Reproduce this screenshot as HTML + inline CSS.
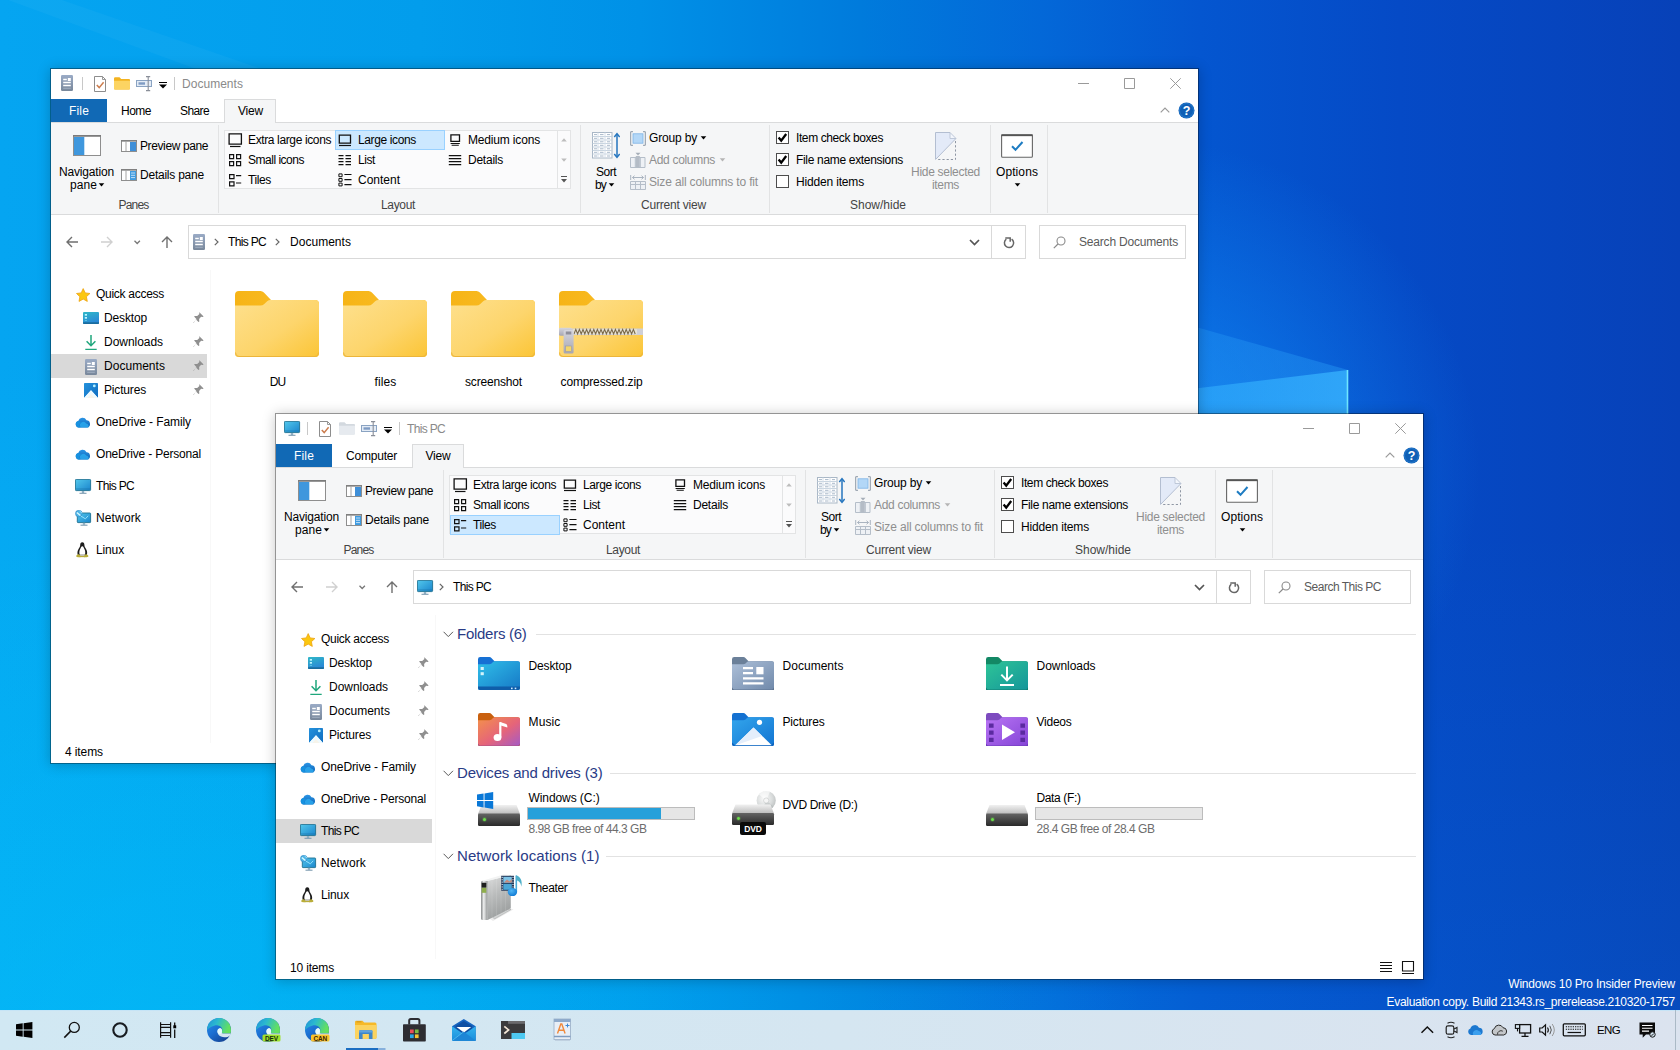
<!DOCTYPE html>
<html><head><meta charset="utf-8">
<style>
*{box-sizing:border-box;margin:0;padding:0}
html,body{width:1680px;height:1050px;overflow:hidden}
body{font-family:"Liberation Sans",sans-serif;font-size:12px;letter-spacing:-0.3px;color:#000;position:relative;
background:
 radial-gradient(ellipse 1000px 700px at 150px 1050px,rgba(0,215,255,.32),rgba(0,215,255,0) 100%),
 linear-gradient(180deg,rgba(0,200,255,0) 50%,rgba(0,200,255,.08) 100%),
 radial-gradient(ellipse 330px 330px at 1150px 470px,rgba(20,150,255,.7),rgba(20,150,255,0) 100%),
 linear-gradient(90deg,#05a5f1 0px,#029dec 420px,#0091e7 640px,#007bdc 860px,#0368d8 1040px,#0456d0 1200px,#054ac6 1400px,#0741b8 1680px);}
.a{position:absolute}
svg{position:absolute;overflow:visible}
.t{position:absolute;white-space:nowrap;line-height:14px}
.c{transform:translateX(-50%)}
.win{position:absolute;width:1149px;border:1px solid rgba(0,0,0,.42);box-shadow:0 1px 12px rgba(0,0,0,.22);}
.wi{position:absolute;left:0;top:0;width:1147px;height:100%;background:#fff;overflow:hidden}
.ttl{color:#8a8a8a}
.file{left:0;top:30px;width:56px;height:23px;background:#1169b5;color:#fff;text-align:center;line-height:24px}
.rib{left:0;top:53px;width:1147px;height:93px;background:#f5f6f7;border-top:1px solid #dadbdc;border-bottom:1px solid #dadbdc}
.vtab{top:30px;width:52px;height:24px;background:#f5f6f7;border:1px solid #dadbdc;border-bottom:none}
.sep{position:absolute;top:56px;width:1px;height:88px;background:#e2e3e4}
.gl{color:#444}
.dis{color:#8f8f8f}
.cb{position:absolute;width:13px;height:13px;border:1px solid #4d4d4d;background:#fff}
.box{position:absolute;border:1px solid #d9d9d9;background:#fff}
.sel{position:absolute;background:#cce8ff;border:1px solid #99d1ff}
.gsel{position:absolute;background:#d9d9d9}
.hdr{position:absolute;font-size:15px;letter-spacing:-0.3px;color:#293b86;white-space:nowrap;line-height:18px}
.hl{position:absolute;height:1px;background:#e2e2e2}
.sub{color:#6d6d6d}
.g5{color:#5a5a5a}
#tb{left:0;top:1010px;width:1680px;height:40px;background:linear-gradient(90deg,#d1e8f3 0,#d5e6f1 50%,#dbe3ef 100%);box-shadow:inset 0 1px 0 #c6e4f6}
.wm{color:#fff;right:5px;text-align:right;letter-spacing:-0.2px}
</style></head><body>
<svg width="0" height="0" style="position:absolute;left:0;top:0">
<defs>
<linearGradient id="g-doc" x1="0" y1="0" x2="0" y2="1"><stop offset="0" stop-color="#9aabc6"/><stop offset="1" stop-color="#78879a"/></linearGradient><linearGradient id="g-desk16" x1="0" y1="0" x2=".4" y2="1"><stop offset="0" stop-color="#30b8c8"/><stop offset="1" stop-color="#2a88d6"/></linearGradient><linearGradient id="g-pic16" x1="0" y1="0" x2="1" y2="1"><stop offset="0" stop-color="#2492dc"/><stop offset="1" stop-color="#0f6cc0"/></linearGradient>
<linearGradient id="g-desk" x1="0" y1="0" x2="1" y2="1"><stop offset="0" stop-color="#3fc0ea"/><stop offset="1" stop-color="#1372bf"/></linearGradient>
<linearGradient id="g-pc" x1="0" y1="0" x2="1" y2="1"><stop offset="0" stop-color="#52c8ec"/><stop offset="1" stop-color="#1a84cc"/></linearGradient>
<linearGradient id="g-cloud" x1="0" y1="0" x2="0" y2="1"><stop offset="0" stop-color="#2a95e6"/><stop offset="1" stop-color="#0f62b4"/></linearGradient>
<linearGradient id="g-fold" x1="0" y1="0" x2="1" y2="1"><stop offset="0" stop-color="#fee08d"/><stop offset=".55" stop-color="#fdd56c"/><stop offset="1" stop-color="#fbc536"/></linearGradient>
<linearGradient id="g-foldtab" x1="0" y1="0" x2="1" y2="0"><stop offset="0" stop-color="#f6b417"/><stop offset="1" stop-color="#fbc02a"/></linearGradient>
</defs>

<!-- ===== title bar ===== -->
<symbol id="i-doc16"><rect x="0" y="0" width="12" height="16" rx="1.2" fill="url(#g-doc)"/><path d="M2.2 4.5h3.6M2.2 7.5h7.6M2.2 10.5h7.6" stroke="#fff" stroke-width="1.3"/><rect x="6.8" y="3" width="3" height="3" fill="#fff"/><path d="M2.2 13.3h7.6" stroke="#a9b6c8" stroke-width=".8"/></symbol>
<symbol id="i-doc16s"><rect x="0" y="0" width="11" height="14" rx="1" fill="url(#g-doc)"/><path d="M2 4h3.2M2 6.6h7M2 9.2h7" stroke="#fff" stroke-width="1.1"/><rect x="6.2" y="2.6" width="2.8" height="2.6" fill="#fff"/></symbol>
<symbol id="i-prop"><path d="M.5 .5h8l3 3v12H.5z" fill="#fff" stroke="#8d8d8d"/><path d="M8.5 .5v3h3" fill="none" stroke="#8d8d8d" stroke-width=".9"/><path d="M2.8 9l2.4 2.6 4.4-5.4" fill="none" stroke="#cc7d4e" stroke-width="1.500"/></symbol>
<symbol id="i-fold16"><path d="M0 1.500Q0 .3 1.200 .3h4.300l1.700 1.600H15q1 0 1 1V11.500q0 1-1 1H1q-1 0-1-1z" fill="#f3b320"/><path d="M0 3.800h16V11.500q0 1-1 1H1q-1 0-1-1z" fill="#fcd462"/></symbol>
<symbol id="i-fold16g"><path d="M0 1.500Q0 .3 1.200 .3h4.300l1.700 1.600H15q1 0 1 1V11.500q0 1-1 1H1q-1 0-1-1z" fill="#d3d9df"/><path d="M0 3.800h16V11.500q0 1-1 1H1q-1 0-1-1z" fill="#e6eaef"/></symbol>
<symbol id="i-ren"><rect x=".5" y="4.5" width="15" height="6" fill="#e4ecf6" stroke="#8aa3c2"/><rect x="2.5" y="6.3" width="6.5" height="2.4" fill="#7f9cc4"/><path d="M10 .6h2.2M14.2 .6h-2M10 14.6h2.2M14.2 14.6h-2M12.2 .6v14" stroke="#8a8f99" stroke-width="1.1" fill="none"/></symbol>

<!-- ===== ribbon ===== -->
<symbol id="i-navpane"><rect x=".5" y="1" width="27" height="19.500" fill="#fff" stroke="#8e8e8e"/><path d="M0 .8h28" stroke="#7b7b7b" stroke-width="1.600"/><rect x="1" y="2" width="10.300" height="18" fill="#3f97dd"/></symbol>
<symbol id="i-prevpane"><rect x=".5" y=".8" width="15" height="10.7" fill="#fff" stroke="#8e8e8e"/><path d="M0 .8h16" stroke="#7b7b7b" stroke-width="1.4"/><path d="M5 1.5v9.5" stroke="#9a9a9a" stroke-width=".9"/><rect x="9" y="2" width="6" height="9" fill="#3f8fd8"/></symbol>
<symbol id="i-detpane"><rect x=".5" y=".8" width="15" height="10.7" fill="#fff" stroke="#8e8e8e"/><path d="M0 .8h16" stroke="#7b7b7b" stroke-width="1.4"/><path d="M5 1.5v9.5" stroke="#9a9a9a" stroke-width=".9"/><rect x="9" y="2" width="6" height="9" fill="#3f9be0"/><path d="M10 4h4M10 6.3h4M10 8.6h4" stroke="#cfe6fa" stroke-width=".9"/></symbol>
<symbol id="i-xl"><path d="M1.1 1.9h12.3v10.2H1.1z" fill="none" stroke="#111" stroke-width="1.3"/><path d="M2 14.5h10.5" stroke="#111" stroke-width="1.2"/></symbol>
<symbol id="i-lg"><path d="M1.3 3.2h11.2v8H1.3z" fill="none" stroke="#111" stroke-width="1.3"/><path d="M1 13.5h12" stroke="#111" stroke-width="1.2"/></symbol>
<symbol id="i-med"><path d="M2.900 2.900h8.600v6.400H2.900z" fill="none" stroke="#111" stroke-width="1.300"/><path d="M2.600 11.500h9.200M3.600 13.300h7.200" stroke="#111" stroke-width="1.100"/></symbol>
<symbol id="i-sm"><path d="M1.6 2.6h4v4h-4zM8.6 2.6h4v4h-4zM1.6 9.6h4v4h-4zM8.6 9.6h4v4h-4z" fill="none" stroke="#111" stroke-width="1.2"/></symbol>
<symbol id="i-tiles"><path d="M1.6 2.6h4.4v4H1.6zM1.6 9.9h4.4v4H1.6z" fill="none" stroke="#111" stroke-width="1.2"/><path d="M8 3.6h5.2M8 11h5.2" stroke="#111" stroke-width="1.2"/></symbol>
<symbol id="i-list"><path d="M.5 3.6h5M7.5 3.6h5.5M.5 6.6h5M7.5 6.6h5.5M.5 9.6h5M7.5 9.6h5.5M.5 12.6h5M7.5 12.6h5.5" stroke="#111" stroke-width="1.2"/></symbol>
<symbol id="i-details"><path d="M.8 3.6h12.4M.8 6.6h12.4M.8 9.6h12.4M.8 12.6h12.4" stroke="#111" stroke-width="1.2"/></symbol>
<symbol id="i-content"><path d="M.9 1.900h3.200v2.800H.9zM.9 6.500h3.200v2.800H.9zM.9 11.100h3.200v2.800H.9z" fill="none" stroke="#111" stroke-width="1"/><path d="M6.400 2.500H13.500M6.400 7.700H13.500M6.400 12.700H13.500" stroke="#111" stroke-width="1.200"/></symbol>
<symbol id="i-sort"><rect x=".5" y=".5" width="19.5" height="25.5" fill="#fff" stroke="#a9b7c6"/><path d="M.5 4.5h19.5M.5 8h19.5M.5 11.5h19.5M.5 15h19.5M.5 18.5h19.5M.5 22h19.5" stroke="#c3d0dd" stroke-width=".9"/><path d="M6 .5v25.5M13 .5v25.5" stroke="#d3dde8" stroke-width=".9"/><path d="M2 2.6h3M8 2.6h3.5M15 2.6h3M2 6.3h3M8 6.3h3.5M15 6.3h3M2 9.8h3M8 9.8h3.5M15 9.8h3M2 13.3h3M8 13.3h3.5M15 13.3h3M2 16.8h3M8 16.8h3.5M15 16.8h3M2 20.3h3M8 20.3h3.5M15 20.3h3M2 24h3M8 24h3.5M15 24h3" stroke="#9fb0c3" stroke-width=".9"/><path d="M25 2.5v22" stroke="#2475be" stroke-width="1.5"/><path d="M22.3 5L25 1.6 27.7 5M22.3 22L25 25.4 27.7 22" fill="none" stroke="#2475be" stroke-width="1.5"/></symbol>
<symbol id="i-group"><rect x="3" y="2.800" width="10" height="9.400" fill="#b3d7f7" stroke="#7db3e6" stroke-width=".8"/><path d="M3 .7H.7v13.600H3M13 .7h2.300v13.600H13" fill="none" stroke="#8e99a6" stroke-width="1"/></symbol>
<symbol id="i-addcol"><path d="M.5 5.5h14.5v10H.5z" fill="#eef1f5" stroke="#b5bec9"/><path d="M5.3 5.5v10M10.3 5.5v10" stroke="#b5bec9"/><rect x="5.8" y="4" width="4" height="11.5" fill="#b4bcc6"/><path d="M5.5 .8h5L8 3.6z" fill="#a6aeb8"/></symbol>
<symbol id="i-sizecol"><path d="M.5 7.5h15v8H.5z" fill="#eef1f5" stroke="#b5bec9"/><path d="M.5 10.5h15M5.5 7.5v8M10.5 7.5v8" stroke="#b5bec9"/><path d="M.7 1v5M15.3 1v5M2.5 3.5h11M4.5 1.7L2.5 3.5l2 1.8M11.5 1.7l2 1.8-2 1.8" fill="none" stroke="#aab4c0" stroke-width="1"/></symbol>
<symbol id="i-hide"><path d="M.5 .5h14.500L21 6.500 .5 27.500z" fill="#e3eaf8"/><path d="M.5 27.500V.5h14.500M20.800 6.700L.7 27.300" fill="none" stroke="#b3bed1" stroke-width="1"/><path d="M15 .5v6h6z" fill="#f3f6fc" stroke="#b9c3d4" stroke-width=".9" stroke-linejoin="round"/><path d="M20.500 9v18.500H2.500" fill="none" stroke="#8f97a4" stroke-width="1" stroke-dasharray="2.200 2"/></symbol>
<symbol id="i-options"><rect x=".6" y="1" width="30.800" height="22.300" rx="1" fill="#fff" stroke="#666" stroke-width="1.100"/><path d="M.3 1.200h31.400" stroke="#555" stroke-width="1.900"/><path d="M11 12.300l3.500 3.500 7-7.800" fill="none" stroke="#1e7cc2" stroke-width="2"/></symbol>

<!-- ===== nav pane ===== -->
<symbol id="i-star"><path d="M7.200 .6l2 4.300 4.700.6-3.500 3.200.9 4.700L7.200 11.100 3 13.400l.9-4.700L.5 5.500l4.700-.6z" fill="#fbc70f" stroke="#eda20f" stroke-width=".8" stroke-linejoin="round"/></symbol>
<symbol id="i-desk16"><rect x="0" y="0" width="16" height="12" rx="1" fill="url(#g-desk16)"/><path d="M0 10.300h16V11q0 1-1 1H1q-1 0-1-1z" fill="#1a6c9e"/><rect x="1.800" y="2" width="2.200" height="1.700" fill="#bdf6ff"/><rect x="1.800" y="5" width="2.200" height="1.700" fill="#bdf6ff"/><rect x="1.800" y="8" width="2.200" height="1" fill="#6fd3ec" opacity=".7"/></symbol>
<symbol id="i-down16"><path d="M7 1v10.500M2.600 7.300L7 11.700l4.400-4.400" fill="none" stroke="#1fa67c" stroke-width="1.500"/><path d="M1.300 15.500h11.400" stroke="#1fa67c" stroke-width="1.500"/></symbol>
<symbol id="i-pic16"><path d="M0 .8Q0 0 .8 0H13.200Q14 0 14 .8V15L7 7.300 0 15z" fill="url(#g-pic16)"/><path d="M0 15L7 7.300 14 15z" fill="#eefaff"/><path d="M3.500 15L7 11l3.500 4z" fill="#f7f4ea"/><circle cx="10.300" cy="2.900" r="1.400" fill="#b5f0ff"/></symbol>
<symbol id="i-cloud"><path d="M3.700 10.400A3.200 3.200 0 0 1 3.200 4.100 4.500 4.500 0 0 1 11.500 3.200 3.700 3.700 0 0 1 12.500 10.400z" fill="url(#g-cloud)"/><path d="M5.600 10.400A3.400 3.400 0 0 1 11.200 6.400 2.800 2.800 0 0 1 13.400 10.400z" fill="#2aa6ec" opacity=".9"/><path d="M3.700 10.400A3.200 3.200 0 0 1 3.200 4.100c.6 0 2 .5 2.800 1.500A3.400 3.400 0 0 0 5.600 10.400z" fill="#1791e0"/></symbol>
<symbol id="i-pc16"><rect x=".4" y=".4" width="15.200" height="11.200" rx=".8" fill="url(#g-pc)" stroke="#1c6f90" stroke-width=".9"/><path d="M1 10h14" stroke="#166a9c" stroke-width="1" opacity=".5"/><path d="M6.800 12h2.400v2H6.800z" fill="#8fb0c4"/><path d="M4.500 14.300h7" stroke="#7d9bb0" stroke-width="1.100"/></symbol>
<symbol id="i-net16"><rect x="2.300" y="3" width="13.300" height="9.600" rx=".7" fill="url(#g-pc)" stroke="#1c6f90" stroke-width=".9"/><path d="M7.800 12.800h2.400v2H7.800z" fill="#8fb0c4"/><path d="M5.500 15.200h7" stroke="#7d9bb0" stroke-width="1.100"/><circle cx="3.800" cy="3.600" r="3.300" fill="#4fb4e6" stroke="#2d86c4" stroke-width=".6"/><path d="M1.800 2.400l3.600 3.200" stroke="#d9fbff" stroke-width="1.300"/><path d="M4.500 .9l2.700 2.300M5.800 6l4.600 2.800 2.800-3" stroke="#9fe6ff" stroke-width=".9" fill="none"/></symbol>
<symbol id="i-linux"><path d="M6.300 .3c1.500 0 2.100 1.200 2.100 2.800 0 1.600 1 2.800 1.900 4.400.9 1.600 1.200 3.800.4 5.700H1.900c-.8-1.900-.5-4.100.4-5.700.9-1.600 1.900-2.800 1.900-4.400C4.200 1.500 4.800.3 6.300.3z" fill="#1c1c1c"/><path d="M6.300 4.200c1.100 0 1.500 1.500 2.200 3 .8 1.500 1.100 3.900.3 5.600H3.800c-.8-1.700-.5-4.100.3-5.600.7-1.500 1.100-3 2.200-3z" fill="#fff"/><path d="M.2 14.300c0-1.100 1.500-2.400 2.700-2 1.100.4 2 1.800 1.700 2.600-.4.700-4.400.5-4.400-.6zM12.400 14.300c0-1.100-1.500-2.400-2.700-2-1.100.4-2 1.800-1.700 2.600.4.700 4.400.5 4.400-.6z" fill="#b9ad3a"/><path d="M3.500 14.500h5.600" stroke="#b9ad3a" stroke-width="1.300"/></symbol>
<symbol id="i-pin"><path d="M6.600 .6l4 4-.9.500-1.600-.3-2 2.300.2 2.300-.8.700-2.500-2.600L.6 10.900l-.2-.3L3.600 7.200 1.100 4.600l.7-.7 2.400.2 2.200-2-.3-1.500z" fill="#8f8f8f"/></symbol>

<!-- ===== big folder (84x66) ===== -->
<defs>
<path id="p-bigback" d="M0 4Q0 0 4 0H25.500Q27.500 0 28.900 1.500L36 9H80Q84 9 84 13V62Q84 66 80 66H4Q0 66 0 62Z"/>
<path id="p-bigfront" d="M0 14.500H25.500Q27.600 14.500 29 13.200L32.200 10.300Q33.600 9 35.600 9H80Q84 9 84 13V62Q84 66 80 66H4Q0 66 0 62Z"/>
<path id="p-fback" d="M0 2.200Q0 0 2.200 0H11.400Q12.600 0 13.400 .9L16.500 4.300H39.800Q42 4.300 42 6.500V30.800Q42 33 39.800 33H2.200Q0 33 0 30.800Z"/>
<path id="p-ffront" d="M0 7.300H11.400Q12.600 7.300 13.500 6.500L15 5.100Q15.900 4.300 17.100 4.300H39.800Q42 4.300 42 6.500V30.800Q42 33 39.800 33H2.200Q0 33 0 30.800Z"/>
<linearGradient id="g-tdesk" x1="0" y1="0" x2="1" y2="1"><stop offset="0" stop-color="#30bfe9"/><stop offset="1" stop-color="#1678c6"/></linearGradient>
<linearGradient id="g-tdocs" x1="0" y1="0" x2="1" y2="1"><stop offset="0" stop-color="#adc0d9"/><stop offset="1" stop-color="#7089aa"/></linearGradient>
<linearGradient id="g-tdown" x1="0" y1="0" x2="1" y2="1"><stop offset="0" stop-color="#2ec597"/><stop offset="1" stop-color="#15959a"/></linearGradient>
<linearGradient id="g-tmus" x1="0" y1="0" x2="1" y2="1"><stop offset="0" stop-color="#f4914a"/><stop offset=".55" stop-color="#e5647a"/><stop offset="1" stop-color="#a45ac6"/></linearGradient>
<linearGradient id="g-tpic" x1="0" y1="0" x2="1" y2="1"><stop offset="0" stop-color="#33a6ec"/><stop offset="1" stop-color="#1274d2"/></linearGradient>
<linearGradient id="g-tvid" x1="0" y1="0" x2="1" y2="1"><stop offset="0" stop-color="#b874f4"/><stop offset="1" stop-color="#8444d6"/></linearGradient>
<linearGradient id="g-drvtop" x1="0" y1="0" x2="0" y2="1"><stop offset="0" stop-color="#f1f1f1"/><stop offset="1" stop-color="#bcbcbc"/></linearGradient>
<linearGradient id="g-drvfront" x1="0" y1="0" x2="0" y2="1"><stop offset="0" stop-color="#646464"/><stop offset="1" stop-color="#2a2a2a"/></linearGradient>
<linearGradient id="g-tside" x1="0" y1="0" x2=".3" y2="1"><stop offset="0" stop-color="#dcdddd"/><stop offset=".5" stop-color="#b9bbbb"/><stop offset="1" stop-color="#9c9f9f"/></linearGradient><linearGradient id="g-tfront" x1="0" y1="0" x2="1" y2="0"><stop offset="0" stop-color="#7d8081"/><stop offset=".4" stop-color="#f0f1f1"/><stop offset=".75" stop-color="#b7b9b9"/><stop offset="1" stop-color="#8f9293"/></linearGradient><radialGradient id="g-note" cx=".4" cy=".35" r=".7"><stop offset="0" stop-color="#4fb6f6"/><stop offset="1" stop-color="#0f78d2"/></radialGradient><linearGradient id="g-tower" x1="0" y1="0" x2="1" y2="0"><stop offset="0" stop-color="#8f9394"/><stop offset=".25" stop-color="#d9dcdc"/><stop offset=".6" stop-color="#c1c4c5"/><stop offset="1" stop-color="#8e9293"/></linearGradient>
<linearGradient id="g-zip" x1="0" y1="0" x2="0" y2="1"><stop offset="0" stop-color="#d6d6de"/><stop offset="1" stop-color="#a6a6b2"/></linearGradient>
</defs>
<symbol id="i-folder"><use href="#p-bigback" fill="url(#g-foldtab)"/><use href="#p-bigfront" fill="url(#g-fold)"/><path d="M.5 61.500Q.5 65.500 4 65.500H80Q83.500 65.500 83.500 61.500" fill="none" stroke="#ecb53a" stroke-width="1"/></symbol>
<symbol id="i-zip"><use href="#p-bigback" fill="url(#g-foldtab)"/><use href="#p-bigfront" fill="url(#g-fold)"/><path d="M.5 61.500Q.5 65.500 4 65.500H80Q83.500 65.500 83.500 61.500" fill="none" stroke="#ecb53a" stroke-width="1"/>
<rect x="0" y="37.500" width="84" height="6.500" fill="#cfcfd6"/><path d="M14 38.200H78V43.300H14z" fill="#e9e4d4"/><path d="M15 43l1.800-4.600 1.800 4.600 1.800-4.600 1.800 4.600 1.800-4.600 1.800 4.600 1.800-4.600 1.800 4.600 1.800-4.600 1.800 4.600 1.800-4.600 1.800 4.600 1.800-4.600 1.800 4.600 1.800-4.600 1.800 4.600 1.800-4.600 1.800 4.600 1.800-4.600 1.800 4.600 1.800-4.600 1.800 4.600 1.800-4.600 1.800 4.600 1.800-4.600 1.800 4.600 1.800-4.600 1.800 4.600 1.800-4.600 1.800 4.600 1.800-4.600 1.800 4.600 1.800-4.600 1.800 4.600" fill="none" stroke="#7b6a4b" stroke-width="1.100"/>
<rect x="0" y="36.800" width="13" height="8" rx="1.500" fill="url(#g-zip)"/><rect x="4.600" y="39" width="10" height="23.500" rx="1.500" fill="url(#g-zip)"/><rect x="6.600" y="55" width="6" height="5.500" fill="#f3d56b" stroke="#9a9aa6" stroke-width=".6"/><rect x="6.800" y="40.500" width="5.500" height="3" fill="#8f8f9b"/></symbol>

<!-- ===== This PC tiles (42x33) ===== -->
<symbol id="t-desk"><use href="#p-fback" fill="#1670d4"/><use href="#p-ffront" fill="url(#g-tdesk)"/><path d="M0 29.600H42V30.800Q42 33 39.800 33H2.200Q0 33 0 30.800Z" fill="#0f5da9"/><rect x="2.600" y="10" width="3.200" height="3" fill="#d4f3fb"/><rect x="2.600" y="15.200" width="3.200" height="3" fill="#d4f3fb"/><rect x="33" y="30.600" width="1.600" height="1.600" fill="#cfeaff"/><rect x="36.700" y="30.600" width="1.600" height="1.600" fill="#cfeaff"/></symbol>
<symbol id="t-docs"><use href="#p-fback" fill="#6b8099"/><use href="#p-ffront" fill="url(#g-tdocs)"/><path d="M0 30.800Q0 33 2.200 33H39.800Q42 33 42 30.800" fill="none" stroke="#5f7591" stroke-width="1.200"/><path d="M11 11.200h10M11 16.200h10M11 21.300h20.500M11 26.400h20.500" stroke="#fff" stroke-width="2.200"/><rect x="24.300" y="10" width="7.200" height="7.300" fill="#fff"/></symbol>
<symbol id="t-down"><use href="#p-fback" fill="#138865"/><use href="#p-ffront" fill="url(#g-tdown)"/><path d="M0 30.800Q0 33 2.200 33H39.800Q42 33 42 30.800" fill="none" stroke="#117f73" stroke-width="1.200"/><path d="M21 9.500V23M15.300 17.600L21 23.400l5.700-5.800" fill="none" stroke="#fff" stroke-width="2"/><path d="M14 28h14" stroke="#fff" stroke-width="2"/></symbol>
<symbol id="t-music"><use href="#p-fback" fill="#c9600e"/><use href="#p-ffront" fill="url(#g-tmus)"/><path d="M0 30.800Q0 33 2.200 33H39.800Q42 33 42 30.800" fill="none" stroke="#a9517e" stroke-width="1"/><ellipse cx="19.500" cy="24.500" rx="3.900" ry="3.500" fill="#fff"/><path d="M22.300 24.500V9.200" stroke="#fff" stroke-width="2.200"/><path d="M22 9l5.500 1.800q1.800.6 1.800 2.200v1.600l-7.300-2.400z" fill="#fff"/></symbol>
<symbol id="t-pics"><use href="#p-fback" fill="#1471d1"/><use href="#p-ffront" fill="url(#g-tpic)"/><path d="M3 32.600L21.500 14.500 40 32.600z" fill="#fff"/><path d="M3 32.600L21.500 14.500 30 23z" fill="#e4eefb"/><path d="M0 29.500L3.300 32.600H2.200Q0 33 0 30.800zM42 29.500L38.700 32.600H39.800Q42 33 42 30.800z" fill="#0f62bb"/><circle cx="27.500" cy="9.300" r="2.600" fill="#fff"/><path d="M1.500 32.700h39" stroke="#0f62bb" stroke-width=".8"/></symbol>
<symbol id="t-vids"><use href="#p-fback" fill="#7d4bbf"/><use href="#p-ffront" fill="url(#g-tvid)"/><path d="M0 30.800Q0 33 2.200 33H39.800Q42 33 42 30.800" fill="none" stroke="#6e3bb8" stroke-width="1.200"/><path d="M3 10.500h4.600v4.200H3zM3 17.600h4.600v4.200H3zM3 24.700h4.600v4.200H3zM34.400 10.500H39v4.200h-4.600zM34.400 17.600H39v4.200h-4.600zM34.400 24.700H39v4.200h-4.600z" fill="#5b2aa0"/><path d="M16 11.500L29 19.200 16 27z" fill="#fff"/></symbol>
<symbol id="t-drive"><path d="M3.500 0H38.500L42 9H0z" fill="url(#g-drvtop)"/><rect x="0" y="8.500" width="42" height="12.500" rx="1.200" fill="url(#g-drvfront)"/><circle cx="6.500" cy="14.500" r="1.500" fill="#6be04a"/><circle cx="6.500" cy="14.500" r="2.400" fill="#6be04a" opacity=".25"/></symbol>
<symbol id="t-winlogo"><path d="M0 2.600L6.600 1.500V8H0zM7.500 1.400L16.200 0V8H7.500zM0 8.900H6.600V15.400L0 14.300zM7.500 8.900H16.200V16.900L7.500 15.500z" fill="#0a78d7"/></symbol>
<symbol id="t-theater">
<path d="M10 45l20.500-10.500 3 1L13 47z" fill="#000" opacity=".08"/>
<path d="M12 42.500l15-7.800 4 .8L14.500 45z" fill="#d3d5d5" stroke="#a0a3a3" stroke-width=".5"/>
<path d="M7.600 6.800L30.800 1V34.300L7.600 46z" fill="url(#g-tside)"/>
<path d="M12 5.800V43.600M16.500 4.700V41.400M21 3.600V39.200M25.500 2.500V37" stroke="#fff" stroke-width=".5" opacity=".22"/>
<path d="M1.100 8.300Q1.100 6.800 2.600 6.800H7.600V46H2.600Q1.100 46 1.100 44.500z" fill="url(#g-tfront)"/>
<path d="M1.600 7L23.500 .6 30.800 1 7.600 6.900z" fill="#f2f3f3"/>
<rect x="1.700" y="8.800" width="4.600" height="5" rx=".8" fill="#1e1f1f"/><rect x="1.700" y="13.800" width="4.600" height="5" fill="#8fae4c"/>
<rect x="21.200" y="1.800" width="12.800" height="14.900" fill="#1f3557"/><rect x="23.300" y="2.800" width="8.500" height="6" fill="#7ec3e6"/><rect x="23.300" y="9.800" width="8.500" height="6" fill="#4aa6d6"/><path d="M24 8.500l3-3 2.500 2 2.300-2.500v3.500z" fill="#c98a7a"/><path d="M22.200 2.800v13M33 2.800v13" stroke="#fff" stroke-width="1" stroke-dasharray="1.100 1.300"/>
<path d="M36.300 18V1.500" stroke="#49a9d8" stroke-width="1.600"/><path d="M36.300 1.200c4 1.500 6.500 5.500 5 11.500-.300-4-2.500-6-5-6.500z" fill="#4fb0c9"/>
<ellipse cx="32.400" cy="18" rx="4.700" ry="4.100" fill="url(#g-note)"/>
</symbol>

<defs><radialGradient id="g-disc" cx=".4" cy=".4" r=".7"><stop offset="0" stop-color="#fbfbfb"/><stop offset=".6" stop-color="#d9dcdc"/><stop offset="1" stop-color="#b9bdbd"/></radialGradient></defs>
<symbol id="t-dvd"><circle cx="34.200" cy="10.500" r="9.600" fill="url(#g-disc)"/><path d="M34.200 10.500L27 4.500A9.600 9.600 0 0 1 38 1.700z" fill="#fff" opacity=".6"/><path d="M34.200 10.500L41.500 16.500A9.600 9.600 0 0 1 30.500 19.300z" fill="#aeb3b3" opacity=".45"/><circle cx="34.200" cy="10.500" r="2.600" fill="#f6f6f6" stroke="#c4c8c8" stroke-width=".6"/>
<path d="M3.500 14.500H38.500L42 23.500H0z" fill="url(#g-drvtop)"/><rect x="0" y="23" width="42" height="12" rx="1.200" fill="url(#g-drvfront)"/><circle cx="6.500" cy="28.500" r="1.400" fill="#6be04a"/><circle cx="6.500" cy="28.500" r="2.300" fill="#6be04a" opacity=".25"/>
<rect x="8" y="32" width="26" height="13" rx="2" fill="#0a0a0a"/><text x="21" y="42" text-anchor="middle" font-family="Liberation Sans" font-weight="bold" font-size="8.500" fill="#fff" letter-spacing="-.2">DVD</text></symbol>
</svg>
<svg id="streak" style="left:0;top:0" width="400" height="70"><path d="M8 0H62L262 69H196z" fill="#fff" opacity=".035"/></svg>
<svg id="beam" style="left:1100px;top:250px;z-index:0" width="300" height="200">
<defs><linearGradient id="g-beam" x1="0" y1="0" x2="1" y2="0"><stop offset="0" stop-color="#2aa6fa" stop-opacity=".55"/><stop offset="1" stop-color="#38b4ff" stop-opacity=".75"/></linearGradient>
<linearGradient id="g-beam2" x1="0" y1="0" x2="1" y2="0"><stop offset="0" stop-color="#2aa0f8" stop-opacity=".25"/><stop offset="1" stop-color="#2aa0f8" stop-opacity=".4"/></linearGradient></defs>
<path d="M0 50L248 120V165H0z" fill="url(#g-beam2)"/>
<path d="M0 150L248 120V165H0z" fill="url(#g-beam)"/>
<path d="M247.500 120V165" stroke="#6fe6ff" stroke-width="1.600"/>
</svg>
<div class="win" style="left:50px;top:68px;height:696px"><div class="wi"><svg style="left:10px;top:6px" width="12" height="16" ><use href="#i-doc16"/></svg><svg style="left:63px;top:8.299999999999997px" width="17" height="14" ><use href="#i-fold16"/></svg>
<div class="a" style="left:31px;top:8px;width:1px;height:13px;background:#c8c8c8"></div>
<svg style="left:43px;top:7px" width="12" height="16" ><use href="#i-prop"/></svg>
<svg style="left:85px;top:7px" width="17" height="16" ><use href="#i-ren"/></svg>
<svg style="left:108px;top:13px" width="8" height="7"><path d="M0 .5h8" stroke="#000"/><path d="M0 2.5h8l-4 4z" fill="#000"/></svg>
<div class="a" style="left:123px;top:8px;width:1px;height:13px;background:#c8c8c8"></div>
<div class="t ttl" style="left:131px;top:7.5px;letter-spacing:0.03px;">Documents</div>
<svg style="left:1027px;top:9px" width="104" height="11"><path d="M0 5.5h11M46.5 .5h10v10h-10zM92.3 .3l10.4 10.4M102.7 .3l-10.4 10.4" fill="none" stroke="#9a9a9a" stroke-width="1"/></svg>
<div class="a file" style="letter-spacing:0.17px;">File</div>
<div class="t " style="left:70px;top:35.0px;letter-spacing:-0.50px;">Home</div>
<div class="t " style="left:129px;top:35.0px;letter-spacing:-0.60px;">Share</div>
<svg style="left:1109px;top:38px" width="10" height="6"><path d="M.7 5.3L5 1l4.3 4.3" fill="none" stroke="#9a9a9a" stroke-width="1.2"/></svg>
<svg style="left:1127px;top:33px" width="17" height="17"><circle cx="8.5" cy="8.5" r="8" fill="#0f5fb5"/><circle cx="8.5" cy="8.5" r="7" fill="none" stroke="#2b7fd0" stroke-width=".8"/><text x="8.5" y="13" text-anchor="middle" font-family="Liberation Sans" font-weight="bold" font-size="12.5" fill="#fff" letter-spacing="0">?</text></svg>
<div class="a rib"></div>
<div class="sep" style="left:167px"></div>
<div class="sep" style="left:529px"></div>
<div class="sep" style="left:718px"></div>
<div class="sep" style="left:939px"></div>
<div class="sep" style="left:996px"></div>
<svg style="left:22px;top:66px" width="29" height="21" ><use href="#i-navpane"/></svg>
<div class="t  c" style="left:35.5px;top:96.1px;letter-spacing:-0.17px;">Navigation</div>
<div class="t  c" style="left:32.5px;top:109.1px;letter-spacing:0.08px;">pane</div>
<svg style="left:47px;top:114px" width="7" height="4"><path d="M.7 .3h5.600L3.500 3.400z" fill="#000"/></svg>
<svg style="left:70px;top:71px" width="16" height="12" ><use href="#i-prevpane"/></svg>
<div class="t " style="left:89px;top:70.1px;letter-spacing:-0.39px;">Preview pane</div>
<svg style="left:70px;top:100px" width="16" height="12" ><use href="#i-detpane"/></svg>
<div class="t " style="left:89px;top:99.1px;letter-spacing:-0.23px;">Details pane</div>
<div class="t gl c" style="left:82.5px;top:129.1px;letter-spacing:-0.80px;">Panes</div>
<div class="a" style="left:173px;top:61px;width:347px;height:59px;border:1px solid #e3e4e5;background:#fbfbfc"></div>
<div class="a" style="left:506px;top:62px;width:1px;height:57px;background:#e3e4e5"></div>
<div class="sel" style="left:284px;top:61px;width:110px;height:20px;"></div>
<svg style="left:177px;top:63px" width="16" height="16" ><use href="#i-xl"/></svg>
<div class="t " style="left:197px;top:64.1px;letter-spacing:-0.37px;">Extra large icons</div>
<svg style="left:177px;top:83px" width="16" height="16" ><use href="#i-sm"/></svg>
<div class="t " style="left:197px;top:84.1px;letter-spacing:-0.49px;">Small icons</div>
<svg style="left:177px;top:103px" width="16" height="16" ><use href="#i-tiles"/></svg>
<div class="t " style="left:197px;top:104.1px;letter-spacing:-0.38px;">Tiles</div>
<svg style="left:287px;top:63px" width="16" height="16" ><use href="#i-lg"/></svg>
<div class="t " style="left:307px;top:64.1px;letter-spacing:-0.37px;">Large icons</div>
<svg style="left:287px;top:83px" width="16" height="16" ><use href="#i-list"/></svg>
<div class="t " style="left:307px;top:84.1px;letter-spacing:-0.42px;">List</div>
<svg style="left:287px;top:103px" width="16" height="16" ><use href="#i-content"/></svg>
<div class="t " style="left:307px;top:104.1px;letter-spacing:-0.00px;">Content</div>
<svg style="left:397px;top:63px" width="16" height="16" ><use href="#i-med"/></svg>
<div class="t " style="left:417px;top:64.1px;letter-spacing:-0.17px;">Medium icons</div>
<svg style="left:397px;top:83px" width="16" height="16" ><use href="#i-details"/></svg>
<div class="t " style="left:417px;top:84.1px;letter-spacing:-0.24px;">Details</div>
<svg style="left:509px;top:62px" width="8" height="57"><path d="M1.200 10.500h5.600L4 7.300zM1.200 27.500h5.600L4 30.700z" fill="#bdbdbd"/><path d="M1 45.500h6" stroke="#555" stroke-width="1"/><path d="M1 48h6l-3 3.500z" fill="#555"/></svg>
<div class="t gl c" style="left:347px;top:129.1px;letter-spacing:-0.34px;">Layout</div>
<svg style="left:541px;top:63px" width="28" height="27" ><use href="#i-sort"/></svg>
<div class="t  c" style="left:555px;top:96.1px;letter-spacing:-0.50px;">Sort</div>
<div class="t  c" style="left:549.5px;top:109.1px;letter-spacing:-0.80px;">by</div>
<svg style="left:557px;top:114px" width="7" height="4"><path d="M.7 .3h5.600L3.500 3.400z" fill="#000"/></svg>
<svg style="left:579px;top:62px" width="16" height="16" ><use href="#i-group"/></svg>
<div class="t " style="left:598px;top:62.099999999999994px;letter-spacing:-0.17px;">Group by</div>
<svg style="left:648.5px;top:67px" width="7" height="4"><path d="M.7 .3h5.600L3.500 3.400z" fill="#000"/></svg>
<svg style="left:579px;top:83px" width="16" height="16" ><use href="#i-addcol"/></svg>
<div class="t dis" style="left:598px;top:84.1px;letter-spacing:-0.31px;">Add columns</div>
<svg style="left:668px;top:89px" width="7" height="4"><path d="M.7 .3h5.600L3.500 3.400z" fill="#b5b5b5"/></svg>
<svg style="left:579px;top:105px" width="16" height="16" ><use href="#i-sizecol"/></svg>
<div class="t dis" style="left:598px;top:106.1px;letter-spacing:-0.16px;">Size all columns to fit</div>
<div class="t gl c" style="left:622.5px;top:129.1px;letter-spacing:-0.20px;">Current view</div>
<div class="cb" style="left:725px;top:62px;width:13px;height:13px;"></div>
<svg style="left:725px;top:62px" width="13" height="13"><path d="M2.6 6.6l2.6 3 5-6.6" fill="none" stroke="#000" stroke-width="2.300"/></svg>
<div class="cb" style="left:725px;top:84px;width:13px;height:13px;"></div>
<svg style="left:725px;top:84px" width="13" height="13"><path d="M2.6 6.6l2.6 3 5-6.6" fill="none" stroke="#000" stroke-width="2.300"/></svg>
<div class="cb" style="left:725px;top:106px;width:13px;height:13px;"></div>
<div class="t " style="left:745px;top:62.099999999999994px;letter-spacing:-0.40px;">Item check boxes</div>
<div class="t " style="left:745px;top:84.1px;letter-spacing:-0.32px;">File name extensions</div>
<div class="t " style="left:745px;top:106.1px;letter-spacing:-0.17px;">Hidden items</div>
<svg style="left:884px;top:63px" width="22" height="28" ><use href="#i-hide"/></svg>
<div class="t dis c" style="left:894.5px;top:96.1px;letter-spacing:-0.29px;">Hide selected</div>
<div class="t dis c" style="left:894.5px;top:109.1px;letter-spacing:-0.33px;">items</div>
<div class="t gl c" style="left:827px;top:129.1px;letter-spacing:-0.00px;">Show/hide</div>
<svg style="left:950px;top:65px" width="32" height="24" ><use href="#i-options"/></svg>
<div class="t  c" style="left:966px;top:96.1px;letter-spacing:0.09px;">Options</div>
<svg style="left:962.5px;top:114px" width="7" height="4"><path d="M.7 .3h5.600L3.500 3.400z" fill="#000"/></svg>
<div class="a vtab" style="left:173px"></div><div class="t " style="left:187px;top:35.0px;letter-spacing:-0.20px;">View</div>
<svg style="left:15px;top:167px" width="110" height="12"><path d="M12 6H1.2M6 1L1 6l5 5" fill="none" stroke="#6f6f6f" stroke-width="1.4"/><path d="M35 6h10.8M41 1l5 5-5 5" fill="none" stroke="#d0d0d0" stroke-width="1.4"/><path d="M68.5 4.8l2.7 2.7 2.7-2.7" fill="none" stroke="#777" stroke-width="1.3"/><path d="M101 12V1.2M96 6l5-5 5 5" fill="none" stroke="#6f6f6f" stroke-width="1.4"/></svg>
<div class="box" style="left:137px;top:156px;width:838px;height:34px;"></div>
<div class="a" style="left:940px;top:157px;width:1px;height:32px;background:#d9d9d9"></div>
<div class="box" style="left:988px;top:156px;width:147px;height:34px;"></div>
<svg style="left:142px;top:164.5px" width="12" height="16" ><use href="#i-doc16"/></svg>
<svg style="left:163px;top:169px" width="5" height="8"><path d="M.8 .8L4 4 .8 7.2" fill="none" stroke="#666" stroke-width="1.2"/></svg>
<div class="t " style="left:177px;top:166.0px;letter-spacing:-0.67px;">This PC</div>
<svg style="left:224px;top:169px" width="5" height="8"><path d="M.8 .8L4 4 .8 7.2" fill="none" stroke="#666" stroke-width="1.2"/></svg>
<div class="t " style="left:239px;top:166.0px;letter-spacing:0.03px;">Documents</div>
<svg style="left:918px;top:170px" width="11" height="7"><path d="M1 1l4.5 4.5L10 1" fill="none" stroke="#555" stroke-width="1.7"/></svg>
<svg style="left:951px;top:166px" width="13" height="14"><path d="M9.600 4.100A4.600 4.600 0 1 1 4.300 4.200" fill="none" stroke="#666" stroke-width="1.500"/><path d="M3.300 2.900H8.200V6.700" fill="none" stroke="#666" stroke-width="1.500"/></svg>
<svg style="left:1002px;top:167px" width="13" height="13"><circle cx="8" cy="5" r="4" fill="none" stroke="#8a8a8a" stroke-width="1.1"/><path d="M5 8L.8 12.2" stroke="#8a8a8a" stroke-width="1.2"/></svg>
<div class="t g5" style="left:1028px;top:166.0px;letter-spacing:-0.19px;">Search Documents</div>
<div class="a" style="left:159px;top:201px;width:1px;bottom:20px;background:#f8f8f8"></div>
<div class="gsel" style="left:0px;top:285.3px;width:156px;height:23.4px;"></div>
<svg style="left:25px;top:218.5px" width="16" height="16" ><use href="#i-star"/></svg>
<div class="t " style="left:45px;top:217.8px;letter-spacing:-0.28px;">Quick access</div>
<svg style="left:32px;top:243px" width="16" height="12" ><use href="#i-desk16"/></svg>
<div class="t " style="left:53px;top:241.8px;letter-spacing:-0.15px;">Desktop</div>
<svg style="left:142px;top:243px" width="11" height="12" ><use href="#i-pin"/></svg>
<svg style="left:33px;top:264.5px" width="14" height="16" ><use href="#i-down16"/></svg>
<div class="t " style="left:53px;top:265.8px;letter-spacing:-0.04px;">Downloads</div>
<svg style="left:142px;top:267px" width="11" height="12" ><use href="#i-pin"/></svg>
<svg style="left:34px;top:289.5px" width="12" height="16" ><use href="#i-doc16"/></svg>
<div class="t " style="left:53px;top:289.8px;letter-spacing:0.03px;">Documents</div>
<svg style="left:142px;top:291px" width="11" height="12" ><use href="#i-pin"/></svg>
<svg style="left:33px;top:314.4px" width="14" height="15" ><use href="#i-pic16"/></svg>
<div class="t " style="left:53px;top:313.8px;letter-spacing:-0.17px;">Pictures</div>
<svg style="left:142px;top:315px" width="11" height="12" ><use href="#i-pin"/></svg>
<svg style="left:23.799999999999997px;top:347.6px" width="18" height="12" ><use href="#i-cloud"/></svg>
<div class="t " style="left:45px;top:345.8px;letter-spacing:-0.10px;">OneDrive - Family</div>
<svg style="left:23.799999999999997px;top:379.6px" width="18" height="12" ><use href="#i-cloud"/></svg>
<div class="t " style="left:45px;top:377.8px;letter-spacing:-0.20px;">OneDrive - Personal</div>
<svg style="left:24px;top:410.2px" width="17" height="16" ><use href="#i-pc16"/></svg>
<div class="t " style="left:45px;top:409.8px;letter-spacing:-0.67px;">This PC</div>
<svg style="left:24px;top:440.8px" width="17" height="16" ><use href="#i-net16"/></svg>
<div class="t " style="left:45px;top:441.79999999999995px;letter-spacing:0.14px;">Network</div>
<svg style="left:25.299999999999997px;top:473px" width="14" height="18" ><use href="#i-linux"/></svg>
<div class="t " style="left:45px;top:473.79999999999995px;letter-spacing:-0.14px;">Linux</div>
<svg style="left:184px;top:222px" width="84" height="66" ><use href="#i-folder"/></svg>
<div class="t  c" style="left:226.5px;top:306.0px;letter-spacing:-0.80px;">DU</div>
<svg style="left:292px;top:222px" width="84" height="66" ><use href="#i-folder"/></svg>
<div class="t  c" style="left:334.5px;top:306.0px;letter-spacing:0.13px;">files</div>
<svg style="left:400px;top:222px" width="84" height="66" ><use href="#i-folder"/></svg>
<div class="t  c" style="left:442.5px;top:306.0px;letter-spacing:-0.17px;">screenshot</div>
<svg style="left:508px;top:222px" width="84" height="66" ><use href="#i-zip"/></svg>
<div class="t  c" style="left:550.5px;top:306.0px;letter-spacing:-0.15px;">compressed.zip</div>
<div class="t " style="left:14px;top:676.0px;letter-spacing:-0.10px;">4 items</div></div></div>
<div class="win" style="left:275px;top:413px;height:567px"><div class="wi"><svg style="left:8px;top:7px" width="17" height="16" ><use href="#i-pc16"/></svg><svg style="left:63px;top:8.299999999999997px" width="17" height="14" ><use href="#i-fold16g"/></svg>
<div class="a" style="left:31px;top:8px;width:1px;height:13px;background:#c8c8c8"></div>
<svg style="left:43px;top:7px" width="12" height="16" ><use href="#i-prop"/></svg>
<svg style="left:85px;top:7px" width="17" height="16" ><use href="#i-ren"/></svg>
<svg style="left:108px;top:13px" width="8" height="7"><path d="M0 .5h8" stroke="#000"/><path d="M0 2.5h8l-4 4z" fill="#000"/></svg>
<div class="a" style="left:123px;top:8px;width:1px;height:13px;background:#c8c8c8"></div>
<div class="t ttl" style="left:131px;top:7.5px;letter-spacing:-0.67px;">This PC</div>
<svg style="left:1027px;top:9px" width="104" height="11"><path d="M0 5.5h11M46.5 .5h10v10h-10zM92.3 .3l10.4 10.4M102.7 .3l-10.4 10.4" fill="none" stroke="#9a9a9a" stroke-width="1"/></svg>
<div class="a file" style="letter-spacing:0.17px;">File</div>
<div class="t " style="left:70px;top:35.0px;letter-spacing:-0.21px;">Computer</div>
<svg style="left:1109px;top:38px" width="10" height="6"><path d="M.7 5.3L5 1l4.3 4.3" fill="none" stroke="#9a9a9a" stroke-width="1.2"/></svg>
<svg style="left:1127px;top:33px" width="17" height="17"><circle cx="8.5" cy="8.5" r="8" fill="#0f5fb5"/><circle cx="8.5" cy="8.5" r="7" fill="none" stroke="#2b7fd0" stroke-width=".8"/><text x="8.5" y="13" text-anchor="middle" font-family="Liberation Sans" font-weight="bold" font-size="12.5" fill="#fff" letter-spacing="0">?</text></svg>
<div class="a rib"></div>
<div class="sep" style="left:167px"></div>
<div class="sep" style="left:529px"></div>
<div class="sep" style="left:718px"></div>
<div class="sep" style="left:939px"></div>
<div class="sep" style="left:996px"></div>
<svg style="left:22px;top:66px" width="29" height="21" ><use href="#i-navpane"/></svg>
<div class="t  c" style="left:35.5px;top:96.1px;letter-spacing:-0.17px;">Navigation</div>
<div class="t  c" style="left:32.5px;top:109.1px;letter-spacing:0.08px;">pane</div>
<svg style="left:47px;top:114px" width="7" height="4"><path d="M.7 .3h5.600L3.500 3.400z" fill="#000"/></svg>
<svg style="left:70px;top:71px" width="16" height="12" ><use href="#i-prevpane"/></svg>
<div class="t " style="left:89px;top:70.1px;letter-spacing:-0.39px;">Preview pane</div>
<svg style="left:70px;top:100px" width="16" height="12" ><use href="#i-detpane"/></svg>
<div class="t " style="left:89px;top:99.1px;letter-spacing:-0.23px;">Details pane</div>
<div class="t gl c" style="left:82.5px;top:129.1px;letter-spacing:-0.80px;">Panes</div>
<div class="a" style="left:173px;top:61px;width:347px;height:59px;border:1px solid #e3e4e5;background:#fbfbfc"></div>
<div class="a" style="left:506px;top:62px;width:1px;height:57px;background:#e3e4e5"></div>
<div class="sel" style="left:174px;top:101px;width:110px;height:20px;"></div>
<svg style="left:177px;top:63px" width="16" height="16" ><use href="#i-xl"/></svg>
<div class="t " style="left:197px;top:64.1px;letter-spacing:-0.37px;">Extra large icons</div>
<svg style="left:177px;top:83px" width="16" height="16" ><use href="#i-sm"/></svg>
<div class="t " style="left:197px;top:84.1px;letter-spacing:-0.49px;">Small icons</div>
<svg style="left:177px;top:103px" width="16" height="16" ><use href="#i-tiles"/></svg>
<div class="t " style="left:197px;top:104.1px;letter-spacing:-0.38px;">Tiles</div>
<svg style="left:287px;top:63px" width="16" height="16" ><use href="#i-lg"/></svg>
<div class="t " style="left:307px;top:64.1px;letter-spacing:-0.37px;">Large icons</div>
<svg style="left:287px;top:83px" width="16" height="16" ><use href="#i-list"/></svg>
<div class="t " style="left:307px;top:84.1px;letter-spacing:-0.42px;">List</div>
<svg style="left:287px;top:103px" width="16" height="16" ><use href="#i-content"/></svg>
<div class="t " style="left:307px;top:104.1px;letter-spacing:-0.00px;">Content</div>
<svg style="left:397px;top:63px" width="16" height="16" ><use href="#i-med"/></svg>
<div class="t " style="left:417px;top:64.1px;letter-spacing:-0.17px;">Medium icons</div>
<svg style="left:397px;top:83px" width="16" height="16" ><use href="#i-details"/></svg>
<div class="t " style="left:417px;top:84.1px;letter-spacing:-0.24px;">Details</div>
<svg style="left:509px;top:62px" width="8" height="57"><path d="M1.200 10.500h5.600L4 7.300zM1.200 27.500h5.600L4 30.700z" fill="#bdbdbd"/><path d="M1 45.500h6" stroke="#555" stroke-width="1"/><path d="M1 48h6l-3 3.500z" fill="#555"/></svg>
<div class="t gl c" style="left:347px;top:129.1px;letter-spacing:-0.34px;">Layout</div>
<svg style="left:541px;top:63px" width="28" height="27" ><use href="#i-sort"/></svg>
<div class="t  c" style="left:555px;top:96.1px;letter-spacing:-0.50px;">Sort</div>
<div class="t  c" style="left:549.5px;top:109.1px;letter-spacing:-0.80px;">by</div>
<svg style="left:557px;top:114px" width="7" height="4"><path d="M.7 .3h5.600L3.500 3.400z" fill="#000"/></svg>
<svg style="left:579px;top:62px" width="16" height="16" ><use href="#i-group"/></svg>
<div class="t " style="left:598px;top:62.099999999999994px;letter-spacing:-0.17px;">Group by</div>
<svg style="left:648.5px;top:67px" width="7" height="4"><path d="M.7 .3h5.600L3.500 3.400z" fill="#000"/></svg>
<svg style="left:579px;top:83px" width="16" height="16" ><use href="#i-addcol"/></svg>
<div class="t dis" style="left:598px;top:84.1px;letter-spacing:-0.31px;">Add columns</div>
<svg style="left:668px;top:89px" width="7" height="4"><path d="M.7 .3h5.600L3.500 3.400z" fill="#b5b5b5"/></svg>
<svg style="left:579px;top:105px" width="16" height="16" ><use href="#i-sizecol"/></svg>
<div class="t dis" style="left:598px;top:106.1px;letter-spacing:-0.16px;">Size all columns to fit</div>
<div class="t gl c" style="left:622.5px;top:129.1px;letter-spacing:-0.20px;">Current view</div>
<div class="cb" style="left:725px;top:62px;width:13px;height:13px;"></div>
<svg style="left:725px;top:62px" width="13" height="13"><path d="M2.6 6.6l2.6 3 5-6.6" fill="none" stroke="#000" stroke-width="2.300"/></svg>
<div class="cb" style="left:725px;top:84px;width:13px;height:13px;"></div>
<svg style="left:725px;top:84px" width="13" height="13"><path d="M2.6 6.6l2.6 3 5-6.6" fill="none" stroke="#000" stroke-width="2.300"/></svg>
<div class="cb" style="left:725px;top:106px;width:13px;height:13px;"></div>
<div class="t " style="left:745px;top:62.099999999999994px;letter-spacing:-0.40px;">Item check boxes</div>
<div class="t " style="left:745px;top:84.1px;letter-spacing:-0.32px;">File name extensions</div>
<div class="t " style="left:745px;top:106.1px;letter-spacing:-0.17px;">Hidden items</div>
<svg style="left:884px;top:63px" width="22" height="28" ><use href="#i-hide"/></svg>
<div class="t dis c" style="left:894.5px;top:96.1px;letter-spacing:-0.29px;">Hide selected</div>
<div class="t dis c" style="left:894.5px;top:109.1px;letter-spacing:-0.33px;">items</div>
<div class="t gl c" style="left:827px;top:129.1px;letter-spacing:-0.00px;">Show/hide</div>
<svg style="left:950px;top:65px" width="32" height="24" ><use href="#i-options"/></svg>
<div class="t  c" style="left:966px;top:96.1px;letter-spacing:0.09px;">Options</div>
<svg style="left:962.5px;top:114px" width="7" height="4"><path d="M.7 .3h5.600L3.500 3.400z" fill="#000"/></svg>
<div class="a vtab" style="left:135.5px"></div><div class="t " style="left:149.5px;top:35.0px;letter-spacing:-0.20px;">View</div>
<svg style="left:15px;top:167px" width="110" height="12"><path d="M12 6H1.2M6 1L1 6l5 5" fill="none" stroke="#6f6f6f" stroke-width="1.4"/><path d="M35 6h10.8M41 1l5 5-5 5" fill="none" stroke="#d0d0d0" stroke-width="1.4"/><path d="M68.5 4.8l2.7 2.7 2.7-2.7" fill="none" stroke="#777" stroke-width="1.3"/><path d="M101 12V1.2M96 6l5-5 5 5" fill="none" stroke="#6f6f6f" stroke-width="1.4"/></svg>
<div class="box" style="left:137px;top:156px;width:838px;height:34px;"></div>
<div class="a" style="left:940px;top:157px;width:1px;height:32px;background:#d9d9d9"></div>
<div class="box" style="left:988px;top:156px;width:147px;height:34px;"></div>
<svg style="left:140.5px;top:165.5px" width="17" height="16" ><use href="#i-pc16"/></svg>
<svg style="left:163px;top:169px" width="5" height="8"><path d="M.8 .8L4 4 .8 7.2" fill="none" stroke="#666" stroke-width="1.2"/></svg>
<div class="t " style="left:177px;top:166.0px;letter-spacing:-0.67px;">This PC</div>
<svg style="left:918px;top:170px" width="11" height="7"><path d="M1 1l4.5 4.5L10 1" fill="none" stroke="#555" stroke-width="1.7"/></svg>
<svg style="left:951px;top:166px" width="13" height="14"><path d="M9.600 4.100A4.600 4.600 0 1 1 4.300 4.200" fill="none" stroke="#666" stroke-width="1.500"/><path d="M3.300 2.900H8.200V6.700" fill="none" stroke="#666" stroke-width="1.500"/></svg>
<svg style="left:1002px;top:167px" width="13" height="13"><circle cx="8" cy="5" r="4" fill="none" stroke="#8a8a8a" stroke-width="1.1"/><path d="M5 8L.8 12.2" stroke="#8a8a8a" stroke-width="1.2"/></svg>
<div class="t g5" style="left:1028px;top:166.0px;letter-spacing:-0.49px;">Search This PC</div>
<div class="a" style="left:159px;top:201px;width:1px;bottom:20px;background:#f8f8f8"></div>
<div class="gsel" style="left:0px;top:405.3px;width:156px;height:23.4px;"></div>
<svg style="left:25px;top:218.5px" width="16" height="16" ><use href="#i-star"/></svg>
<div class="t " style="left:45px;top:217.8px;letter-spacing:-0.28px;">Quick access</div>
<svg style="left:32px;top:243px" width="16" height="12" ><use href="#i-desk16"/></svg>
<div class="t " style="left:53px;top:241.8px;letter-spacing:-0.15px;">Desktop</div>
<svg style="left:142px;top:243px" width="11" height="12" ><use href="#i-pin"/></svg>
<svg style="left:33px;top:264.5px" width="14" height="16" ><use href="#i-down16"/></svg>
<div class="t " style="left:53px;top:265.8px;letter-spacing:-0.04px;">Downloads</div>
<svg style="left:142px;top:267px" width="11" height="12" ><use href="#i-pin"/></svg>
<svg style="left:34px;top:289.5px" width="12" height="16" ><use href="#i-doc16"/></svg>
<div class="t " style="left:53px;top:289.8px;letter-spacing:0.03px;">Documents</div>
<svg style="left:142px;top:291px" width="11" height="12" ><use href="#i-pin"/></svg>
<svg style="left:33px;top:314.4px" width="14" height="15" ><use href="#i-pic16"/></svg>
<div class="t " style="left:53px;top:313.8px;letter-spacing:-0.17px;">Pictures</div>
<svg style="left:142px;top:315px" width="11" height="12" ><use href="#i-pin"/></svg>
<svg style="left:23.799999999999997px;top:347.6px" width="18" height="12" ><use href="#i-cloud"/></svg>
<div class="t " style="left:45px;top:345.8px;letter-spacing:-0.10px;">OneDrive - Family</div>
<svg style="left:23.799999999999997px;top:379.6px" width="18" height="12" ><use href="#i-cloud"/></svg>
<div class="t " style="left:45px;top:377.8px;letter-spacing:-0.20px;">OneDrive - Personal</div>
<svg style="left:24px;top:410.2px" width="17" height="16" ><use href="#i-pc16"/></svg>
<div class="t " style="left:45px;top:409.8px;letter-spacing:-0.67px;">This PC</div>
<svg style="left:24px;top:440.8px" width="17" height="16" ><use href="#i-net16"/></svg>
<div class="t " style="left:45px;top:441.79999999999995px;letter-spacing:0.14px;">Network</div>
<svg style="left:25.299999999999997px;top:473px" width="14" height="18" ><use href="#i-linux"/></svg>
<div class="t " style="left:45px;top:473.79999999999995px;letter-spacing:-0.14px;">Linux</div>
<svg style="left:167px;top:216.5px" width="11" height="7"><path d="M.6 .8L5.300 5.600 10 .8" fill="none" stroke="#5a5a5a" stroke-width="1"/></svg><div class="hdr" style="left:181px;top:210.60000000000002px;letter-spacing:-0.27px;">Folders (6)</div><div class="hl" style="left:260px;top:220.0px;width:880px"></div>
<svg style="left:202px;top:243px" width="42" height="33"><use href="#t-desk"/></svg>
<div class="t " style="left:252.5px;top:244.70000000000005px;letter-spacing:-0.15px;">Desktop</div>
<svg style="left:456px;top:243px" width="42" height="33"><use href="#t-docs"/></svg>
<div class="t " style="left:506.5px;top:244.70000000000005px;letter-spacing:0.03px;">Documents</div>
<svg style="left:710px;top:243px" width="42" height="33"><use href="#t-down"/></svg>
<div class="t " style="left:760.5px;top:244.70000000000005px;letter-spacing:-0.04px;">Downloads</div>
<svg style="left:202px;top:299px" width="42" height="33"><use href="#t-music"/></svg>
<div class="t " style="left:252.5px;top:300.70000000000005px;letter-spacing:0.13px;">Music</div>
<svg style="left:456px;top:299px" width="42" height="33"><use href="#t-pics"/></svg>
<div class="t " style="left:506.5px;top:300.70000000000005px;letter-spacing:-0.17px;">Pictures</div>
<svg style="left:710px;top:299px" width="42" height="33"><use href="#t-vids"/></svg>
<div class="t " style="left:760.5px;top:300.70000000000005px;letter-spacing:-0.25px;">Videos</div>
<svg style="left:167px;top:355.5px" width="11" height="7"><path d="M.6 .8L5.300 5.600 10 .8" fill="none" stroke="#5a5a5a" stroke-width="1"/></svg><div class="hdr" style="left:181px;top:349.6px;letter-spacing:-0.17px;">Devices and drives (3)</div><div class="hl" style="left:334px;top:359.0px;width:806px"></div>
<svg style="left:202px;top:390.5px" width="42" height="21"><use href="#t-drive"/></svg>
<svg style="left:201px;top:377.79999999999995px" width="17" height="17"><use href="#t-winlogo"/></svg>
<div class="t " style="left:252.5px;top:376.70000000000005px;letter-spacing:-0.08px;">Windows (C:)</div>
<div class="a" style="left:251px;top:393px;width:168px;height:13px;background:#e6e6e6;border:1px solid #bcbcbc"><div style="width:133px;height:11px;background:#26a0da"></div></div>
<div class="t sub" style="left:252.5px;top:408.0px;letter-spacing:-0.47px;">8.98 GB free of 44.3 GB</div>
<svg style="left:456px;top:376px" width="44" height="45"><use href="#t-dvd"/></svg>
<div class="t " style="left:506.5px;top:383.70000000000005px;letter-spacing:-0.36px;">DVD Drive (D:)</div>
<svg style="left:710px;top:390.5px" width="42" height="21"><use href="#t-drive"/></svg>
<div class="t " style="left:760.5px;top:376.70000000000005px;letter-spacing:-0.37px;">Data (F:)</div>
<div class="a" style="left:759px;top:393px;width:168px;height:13px;background:#e6e6e6;border:1px solid #bcbcbc"></div>
<div class="t sub" style="left:760.5px;top:408.0px;letter-spacing:-0.47px;">28.4 GB free of 28.4 GB</div>
<svg style="left:167px;top:438.5px" width="11" height="7"><path d="M.6 .8L5.300 5.600 10 .8" fill="none" stroke="#5a5a5a" stroke-width="1"/></svg><div class="hdr" style="left:181px;top:432.6px;letter-spacing:0.08px;">Network locations (1)</div><div class="hl" style="left:330px;top:442.0px;width:810px"></div>
<svg style="left:204px;top:460px" width="44" height="48"><use href="#t-theater"/></svg>
<div class="t " style="left:252.5px;top:466.70000000000005px;letter-spacing:-0.34px;">Theater</div>
<div class="t " style="left:14px;top:547.0px;letter-spacing:-0.17px;">10 items</div>
<svg style="left:1104px;top:547px" width="36" height="13"><path d="M0 1.5h12M0 4.5h12M0 7.5h12M0 10.5h12" stroke="#111" stroke-width="1"/><path d="M22.500 .5h11v9.500h-11zM22 12.500h12" fill="none" stroke="#111" stroke-width="1.100"/></svg></div></div>
<div class="t wm" style="top:977px">Windows 10 Pro Insider Preview</div>
<div class="t wm" style="top:995px;letter-spacing:-0.3px">Evaluation copy. Build 21343.rs_prerelease.210320-1757</div>
<div class="a" id="tb">
<svg style="left:0;top:0" width="1680" height="40">
<defs>
<linearGradient id="g-edge" x1="0" y1="0" x2="1" y2=".35"><stop offset="0" stop-color="#1f8fd8"/><stop offset=".45" stop-color="#2bb9cf"/><stop offset="1" stop-color="#63e060"/></linearGradient>
<linearGradient id="g-edge2" x1="0" y1="0" x2=".8" y2="1"><stop offset="0" stop-color="#2a90ea"/><stop offset=".5" stop-color="#1b6fd2"/><stop offset="1" stop-color="#143f8e"/></linearGradient>
<linearGradient id="g-mail" x1="0" y1="0" x2="0" y2="1"><stop offset="0" stop-color="#35b3ee"/><stop offset="1" stop-color="#1a8edb"/></linearGradient>
<g id="edge"><circle cx="0" cy="0" r="12" fill="url(#g-edge2)"/>
<path d="M-12 0A12 12 0 0 1 0 -12A12 12 0 0 1 11.490 3.460H4C2.500 3.500 2.500 2 3 1 4 -1 2.500-4.300-1.200-4.600-5.500-5-9.500-2-12 0z" fill="url(#g-edge)"/>
<path d="M.5-1.800C-2.300-.5-2.300 4.500 2 6.600 5 8 9 7.400 11 5.400L11.500 3.500H4C2.500 3.500 2.500 2 3 1 3.500 0 2.200-2.600.5-1.800z" fill="#d6e6f1"/>
<ellipse cx=".7" cy="1.200" rx="2.300" ry="2.700" fill="#e4fbff"/></g>
</defs>
<!-- start -->
<path d="M16 14.300L22.700 13.300V19.600H16zM23.600 13.200L32.400 12V19.600H23.600zM16 20.500H22.700V26.800L16 25.800zM23.600 20.500H32.400V28L23.600 26.800z" fill="#000"/>
<!-- search -->
<circle cx="74.300" cy="17.400" r="5" fill="none" stroke="#111" stroke-width="1.300"/><path d="M70.700 21.100L64.300 27.600" stroke="#111" stroke-width="1.500"/>
<!-- cortana -->
<circle cx="120" cy="20" r="6.700" fill="none" stroke="#181c21" stroke-width="2.100"/>
<!-- task view -->
<path d="M160.600 12.300v15.400M170.600 12.300v15.400M160.600 14.500h10M160.600 25.500h10M160.600 17.300h10M160.600 22.700h10" stroke="#111" stroke-width="1.200" fill="none"/><path d="M174.700 12.500v3.500M174.700 19.500v8.500" stroke="#111" stroke-width="1.300"/><rect x="173.300" y="15.300" width="2.900" height="3" fill="#000"/>
<!-- edge x3 -->
<use href="#edge" transform="translate(219 20)"/>
<use href="#edge" transform="translate(268 20)"/>
<rect x="262.500" y="24.600" width="18" height="7" rx="1.500" fill="#9fe02e"/><text x="271.500" y="30.500" text-anchor="middle" font-family="Liberation Sans" font-weight="bold" font-size="6.500" fill="#142a0a" letter-spacing="-.1">DEV</text>
<use href="#edge" transform="translate(317 20)"/>
<rect x="311" y="24.600" width="18.500" height="7" rx="1.500" fill="#fac42e"/><text x="320.300" y="30.500" text-anchor="middle" font-family="Liberation Sans" font-weight="bold" font-size="6.500" fill="#3a2500" letter-spacing="-.1">CAN</text>
<!-- file explorer -->
<path d="M355 12q0-1.300 1.300-1.300h6.200l1.700 1.700H375q1.500 0 1.500 1.500V27.500q0 1.300-1.300 1.300H356.300Q355 28.800 355 27.500z" fill="#f6b928"/><path d="M356.500 11.800h5" stroke="#d99a17" stroke-width="1.200"/><path d="M355 15h21.500v12.500q0 1.300-1.300 1.300H356.300Q355 28.800 355 27.500z" fill="#fbd35f"/><path d="M359 29v-7.500q0-1.200 1.200-1.200h11.100q1.200 0 1.200 1.200V29h-3.600v-5h-6.300v5z" fill="#3f86c8"/><path d="M359 21.500q0-1.200 1.200-1.200h11.100q1.200 0 1.200 1.200v1h-13.500z" fill="#5fa3df"/>
<rect x="346" y="38" width="32" height="2" fill="#1b6ec2"/><rect x="378" y="38" width="7.500" height="2" fill="#86b0dc"/>
<!-- store -->
<path d="M409.200 14.500V10.600q0-1.600 1.600-1.600h7q1.600 0 1.600 1.600v3.900" fill="none" stroke="#2d2d32" stroke-width="2"/><rect x="403" y="14.300" width="22.800" height="17.200" rx=".8" fill="#2d2d32"/><rect x="410" y="19.500" width="3.700" height="3.700" fill="#ea4e5a"/><rect x="414.900" y="19.500" width="3.700" height="3.700" fill="#7cbb42"/><rect x="410" y="24.400" width="3.700" height="3.700" fill="#2aa7e6"/><rect x="414.900" y="24.400" width="3.700" height="3.700" fill="#f7c331"/>
<!-- mail -->
<path d="M452 16.200L463.800 9l11.900 7.200V30.700H452z" fill="#1764c0"/><path d="M455.500 16l8.300-5 8.400 5v6h-16.700z" fill="#0f4fa3"/><path d="M456.500 17h14.700l-7.300 5.500z" fill="#fff"/><path d="M452 16.200l11.800 8 11.900-8V30.700H452z" fill="url(#g-mail)"/><path d="M452 30.700l11.800-9 11.900 9z" fill="#1d86d6"/><path d="M452 30.700l11.800-9" stroke="#5cc3f4" stroke-width=".7"/>
<!-- terminal -->
<rect x="501" y="11" width="24" height="18" fill="#3b3b3d"/><rect x="508" y="11" width="17" height="2.800" fill="#6b6b6e"/><rect x="511.500" y="23" width="13.500" height="6" fill="#4ec9f1"/><path d="M504.300 16.300l4.300 3.600-4.300 3.600" fill="none" stroke="#f3e6d6" stroke-width="1.700"/>
<!-- dictionary -->
<rect x="554" y="9" width="16.500" height="20.500" fill="#e9eff6" stroke="#9fb4cc" stroke-width=".9"/><rect x="554" y="9" width="16.500" height="3" fill="#8eaacb"/><path d="M557.500 23.500l3.300-9.500h1l3.300 9.500M558.700 20.300h5.300" fill="none" stroke="#f08a3c" stroke-width="1.400"/><path d="M565.500 15.500h4M567.500 13.600v3.800" stroke="#3d8ad6" stroke-width="1"/><path d="M554 26.500h16.500" stroke="#7f9cc0" stroke-width="1.500"/><path d="M555 30.300h15" stroke="#b9c8d9" stroke-width=".9"/>
<!-- tray -->
<path d="M1421.500 22.800L1427.300 17l5.800 5.800" fill="none" stroke="#111" stroke-width="1.500"/>
<rect x="1446.200" y="15.800" width="7.600" height="8.400" rx="1.800" fill="none" stroke="#222" stroke-width="1.200"/><path d="M1454 19l3-1.600v5.200l-3-1.600" fill="none" stroke="#222" stroke-width="1.100"/><path d="M1447.500 13.200q3.500-1.800 7 0M1447.500 26.800q3.500 1.800 7 0" fill="none" stroke="#222" stroke-width="1.100"/>
<path d="M1471 25A3.300 3.300 0 0 1 1470.400 18.600 4.600 4.600 0 0 1 1479 17.700 3.700 3.700 0 0 1 1479.800 25z" fill="#1c78d0"/><path d="M1473.200 25A3.500 3.500 0 0 1 1478.800 21 2.700 2.700 0 0 1 1480.800 25z" fill="#3b9fee"/>
<path d="M1495 25A3.300 3.300 0 0 1 1494.400 18.600 4.600 4.600 0 0 1 1503 17.700 3.700 3.700 0 0 1 1503.800 25z" fill="#c3c6c9" stroke="#2a2a2a" stroke-width="1"/><path d="M1497.500 24.500A3.500 3.500 0 0 1 1502.800 21.200" fill="none" stroke="#2a2a2a" stroke-width=".9"/>
<rect x="1519.600" y="14.600" width="11" height="8.400" fill="none" stroke="#111" stroke-width="1.300"/><path d="M1525 23v3M1521.500 26.300h7" stroke="#111" stroke-width="1.300"/><rect x="1515.400" y="14.600" width="4.200" height="3.800" fill="#d6e6f1" stroke="#111" stroke-width="1.100"/><path d="M1517.500 18.400v3" stroke="#111" stroke-width="1.100"/>
<path d="M1539.700 18h2.500l3.300-3.200v10.400l-3.300-3.200h-2.500z" fill="none" stroke="#111" stroke-width="1.200"/><path d="M1547.500 17.500q1.700 2.500 0 5" fill="none" stroke="#111" stroke-width="1.100"/><path d="M1549.800 15.800q3 4.200 0 8.400" fill="none" stroke="#555" stroke-width="1"/><path d="M1552.200 14q4.200 6 0 12" fill="none" stroke="#999" stroke-width="1"/>
<rect x="1563.300" y="13.800" width="22" height="12" rx="1" fill="none" stroke="#111" stroke-width="1.300"/><path d="M1565.800 16.800h17M1565.800 19.300h17" stroke="#111" stroke-width="1.100" stroke-dasharray="1.300 1"/><path d="M1567.500 22.500h13.500" stroke="#111" stroke-width="1.200"/>
<path d="M1639.500 12.500h15.500v12h-9l-3.300 3.300v-3.300h-3.200z" fill="#0b0b0b"/><path d="M1642 15.500h10.500M1642 18.300h10.500M1642 21.100h7" stroke="#fff" stroke-width="1.100"/><circle cx="1652.500" cy="24.500" r="2.700" fill="#d6e6f1" stroke="#111" stroke-width="1"/><path d="M1651.300 25.300q1.300 .5 2.300-1.700" fill="none" stroke="#111" stroke-width=".9"/>
<path d="M1675.500 0v40" stroke="#aab9c6" stroke-width="1"/>
</svg>
<div class="t" style="left:1597px;top:13px;font-size:11.500px;letter-spacing:-.6px">ENG</div>
</div>

</body></html>
